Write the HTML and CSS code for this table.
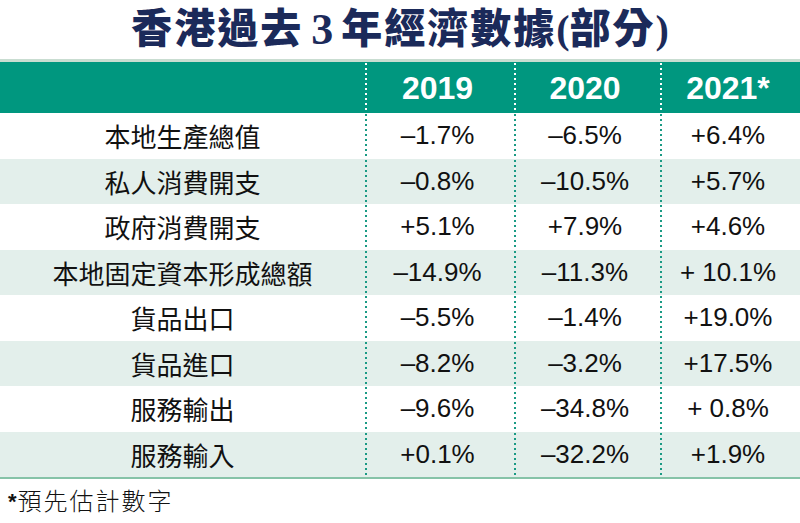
FILE: index.html
```html
<!DOCTYPE html>
<html lang="zh-Hant">
<head>
<meta charset="utf-8">
<title>香港過去3年經濟數據(部分)</title>
<link rel="stylesheet" href="styles.css">
</head>
<body>
<div class="page">
  <h1 class="title">香港過去<span class="num">3</span>年經濟數據<span class="paren">(</span>部分<span class="paren">)</span></h1>
  <div class="table">
    <div class="row head">
      <div class="cell label"></div>
      <div class="cell val">2019</div>
      <div class="cell val">2020</div>
      <div class="cell val">2021*</div>
    </div>
    <div class="row">
      <div class="cell label">本地生產總值</div>
      <div class="cell val">–1.7%</div>
      <div class="cell val">–6.5%</div>
      <div class="cell val">+6.4%</div>
    </div>
    <div class="row alt">
      <div class="cell label">私人消費開支</div>
      <div class="cell val">–0.8%</div>
      <div class="cell val">–10.5%</div>
      <div class="cell val">+5.7%</div>
    </div>
    <div class="row">
      <div class="cell label">政府消費開支</div>
      <div class="cell val">+5.1%</div>
      <div class="cell val">+7.9%</div>
      <div class="cell val">+4.6%</div>
    </div>
    <div class="row alt">
      <div class="cell label">本地固定資本形成總額</div>
      <div class="cell val">–14.9%</div>
      <div class="cell val">–11.3%</div>
      <div class="cell val">+ 10.1%</div>
    </div>
    <div class="row">
      <div class="cell label">貨品出口</div>
      <div class="cell val">–5.5%</div>
      <div class="cell val">–1.4%</div>
      <div class="cell val">+19.0%</div>
    </div>
    <div class="row alt">
      <div class="cell label">貨品進口</div>
      <div class="cell val">–8.2%</div>
      <div class="cell val">–3.2%</div>
      <div class="cell val">+17.5%</div>
    </div>
    <div class="row">
      <div class="cell label">服務輸出</div>
      <div class="cell val">–9.6%</div>
      <div class="cell val">–34.8%</div>
      <div class="cell val">+ 0.8%</div>
    </div>
    <div class="row alt last">
      <div class="cell label">服務輸入</div>
      <div class="cell val">+0.1%</div>
      <div class="cell val">–32.2%</div>
      <div class="cell val">+1.9%</div>
    </div>
  </div>
  <p class="note"><span class="star">*</span>預先估計數字</p>
</div>
</body>
</html>
```

FILE: styles.css
```css
html, body {
  margin: 0;
  padding: 0;
  background: #ffffff;
}

.page {
  width: 800px;
  height: 523px;
  overflow: hidden;
  font-family: "Noto Sans CJK TC", sans-serif;
  color: #111111;
}

.title {
  margin: 0;
  height: 59px;
  display: flex;
  align-items: center;
  justify-content: center;
  font-family: "Liberation Serif", "Noto Sans CJK TC", serif;
  font-weight: 900;
  font-size: 41px;
  letter-spacing: 2px;
  color: #1b2a5a;
  line-height: 1;
}

.title .num {
  font-family: "Liberation Serif", serif;
  font-weight: 700;
  font-size: 44px;
  padding: 0 6px 0 8px;
}

.title .paren {
  font-family: "Liberation Serif", serif;
  font-weight: 700;
  font-size: 40px;
  letter-spacing: 0;
}

.table {
  border-top: 3px solid #c9ddd1;
  border-bottom: 2px solid #86c3a8;
}

.row {
  display: grid;
  grid-template-columns: 365px 149px 146px 140px;
  height: 45.5px;
  background: #ffffff;
}

.row.alt {
  background: #e3efeb;
}

.row.head {
  height: 51px;
  background: #00977f;
}

.cell {
  display: flex;
  align-items: center;
  justify-content: center;
}

.label {
  font-family: "Noto Sans CJK TC", sans-serif;
  font-size: 26px;
  color: #111111;
}

.val {
  font-family: "Liberation Sans", Arial, sans-serif;
  font-size: 26px;
  color: #111111;
  background-image: linear-gradient(to bottom, #1a9a84 0, #1a9a84 2px, transparent 2px, transparent 5px);
  background-size: 2px 5px;
  background-repeat: repeat-y;
  background-position: 0 1px;
  padding-right: 4px;
}

.head .val {
  font-weight: 700;
  font-size: 32px;
  color: #ffffff;
  background-image: linear-gradient(to bottom, #ffffff 0, #ffffff 2px, transparent 2px, transparent 5px);
  padding-top: 2px;
}

.note {
  margin: 0;
  padding: 8px 0 0 8px;
  font-family: "Liberation Serif", "Noto Sans CJK TC", serif;
  font-size: 24px;
  font-weight: 300;
  letter-spacing: 2px;
  line-height: 30px;
  color: #111111;
}

.note .star {
  display: inline-block;
  font-family: "Liberation Sans", sans-serif;
  font-weight: 700;
  font-size: 22px;
  letter-spacing: 0;
  margin-right: 1px;
  vertical-align: top;
}
```
